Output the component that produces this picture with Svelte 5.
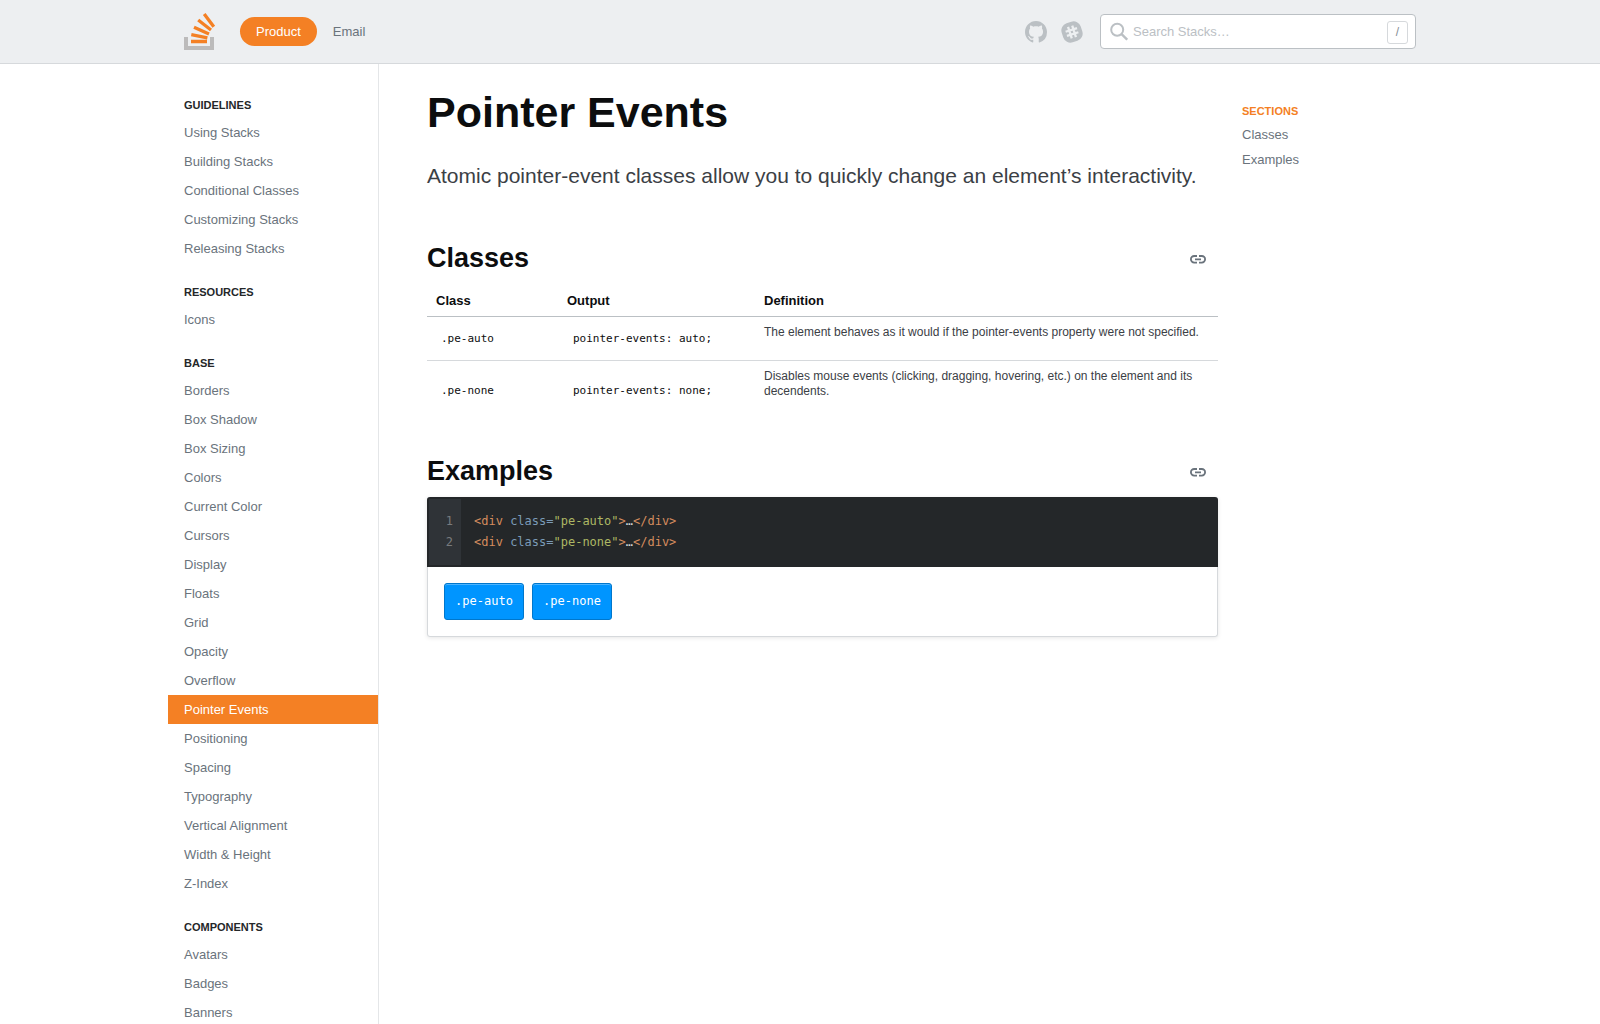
<script>
  const groups = [
    { title: 'Guidelines', items: ['Using Stacks', 'Building Stacks', 'Conditional Classes', 'Customizing Stacks', 'Releasing Stacks'] },
    { title: 'Resources', items: ['Icons'] },
    {
      title: 'Base',
      items: ['Borders', 'Box Shadow', 'Box Sizing', 'Colors', 'Current Color', 'Cursors', 'Display', 'Floats', 'Grid', 'Opacity', 'Overflow', 'Pointer Events', 'Positioning', 'Spacing', 'Typography', 'Vertical Alignment', 'Width & Height', 'Z-Index']
    },
    { title: 'Components', items: ['Avatars', 'Badges', 'Banners'] }
  ];
  const current = 'Pointer Events';

  const rows = [
    { name: '.pe-auto', output: 'pointer-events: auto;', text: 'The element behaves as it would if the pointer-events property were not specified.' },
    { name: '.pe-none', output: 'pointer-events: none;', text: 'Disables mouse events (clicking, dragging, hovering, etc.) on the element and its decendents.' }
  ];
  const examples = ['pe-auto', 'pe-none'];
  let query = $state('');
</script>

{#snippet heading(title)}
  <div class="section-head" id={title.toLowerCase()}>
    <h2>{title}</h2>
    <a class="anchor" href="#{title.toLowerCase()}" aria-label="Link to {title}">
      <svg width="16" height="9" viewBox="0 0 16 9" aria-hidden="true">
        <path d="M7 1H4.2a3.3 3.3 0 0 0 0 6.6H7M9 1h2.8a3.3 3.3 0 0 1 0 6.6H9M5 4.3h6" fill="none" stroke="currentColor" stroke-width="1.8" />
      </svg>
    </a>
  </div>
{/snippet}

<header class="topbar">
  <div class="container bar">
    <a class="logo" href="#home" aria-label="Stacks">
      <svg width="32" height="38" viewBox="0 12 32 38" aria-hidden="true">
        <path d="M0 37h4v9h22v-9h4v13H0z" fill="#bcbbbb" />
        <path d="M7 41.5h16M7.3 34.6l16.1 3.3M10 27.3l15 6.7M14.2 20l12.8 10M20.2 14l9.6 12.7" fill="none" stroke="#f48024" stroke-width="3.3" />
      </svg>
    </a>
    <nav class="tabs" aria-label="Main">
      <a class="tab selected" href="#product">Product</a>
      <a class="tab" href="#email">Email</a>
    </nav>
    <div class="social">
      <a href="#github" aria-label="GitHub">
        <svg width="22" height="22" viewBox="0 0 16 16" aria-hidden="true">
          <path fill="currentColor" d="M8 0C3.58 0 0 3.58 0 8c0 3.54 2.29 6.53 5.47 7.59.4.07.55-.17.55-.38 0-.19-.01-.82-.01-1.49-2.01.37-2.53-.49-2.69-.94-.09-.23-.48-.94-.82-1.13-.28-.15-.68-.52-.01-.53.63-.01 1.08.58 1.23.82.72 1.21 1.87.87 2.33.66.07-.52.28-.87.51-1.07-1.78-.2-3.64-.89-3.64-3.95 0-.87.31-1.59.82-2.15-.08-.2-.36-1.02.08-2.12 0 0 .67-.21 2.2.82.64-.18 1.32-.27 2-.27s1.36.09 2 .27c1.53-1.04 2.2-.82 2.2-.82.44 1.1.16 1.92.08 2.12.51.56.82 1.27.82 2.15 0 3.07-1.87 3.75-3.65 3.95.29.25.54.73.54 1.48 0 1.07-.01 1.93-.01 2.2 0 .21.15.46.55.38A8.01 8.01 0 0 0 16 8c0-4.42-3.58-8-8-8z" />
        </svg>
      </a>
      <a href="#slack" aria-label="Slack">
        <svg width="22" height="22" viewBox="0 0 22 22" aria-hidden="true">
          <g transform="rotate(-18 11 11)">
            <rect x="1" y="1" width="20" height="20" rx="7.5" fill="currentColor" />
            <path d="M8.8 5v12M13.2 5v12M5 8.8h12M5 13.2h12" fill="none" stroke="#edeff1" stroke-width="2.3" />
          </g>
        </svg>
      </a>
    </div>
    <label class="search">
      <svg width="18" height="20" viewBox="0 0 18 20" aria-hidden="true">
        <circle cx="7.2" cy="7.7" r="6" fill="none" stroke="currentColor" stroke-width="2" />
        <path d="M11.6 12.1l5.6 5.6" stroke="currentColor" stroke-width="2.4" />
      </svg>
      <input type="text" placeholder="Search Stacks…" aria-label="Search Stacks" bind:value={query} />
      <kbd>/</kbd>
    </label>
  </div>
</header>

<div class="container page">
  <nav class="sidebar" aria-label="Documentation">
    {#each groups as group}
      <h3>{group.title}</h3>
      <ul>
        {#each group.items as item}
          <li><a class:active={item === current} href="#{item}">{item}</a></li>
        {/each}
      </ul>
    {/each}
  </nav>

  <main>
    <h1>Pointer Events</h1>
    <p class="lead">Atomic pointer-event classes allow you to quickly change an element’s interactivity.</p>

    <section>
      {@render heading('Classes')}
      <table>
        <thead>
          <tr><th class="c-name" scope="col">Class</th><th class="c-output" scope="col">Output</th><th scope="col">Definition</th></tr>
        </thead>
        <tbody>
          {#each rows as row}
            <tr>
              <td><code>{row.name}</code></td>
              <td><code>{row.output}</code></td>
              <td><p>{row.text}</p></td>
            </tr>
          {/each}
        </tbody>
      </table>
    </section>

    <section>
      {@render heading('Examples')}
      <div class="preview">
        <div class="source">
          <div class="gutter">{#each examples as _, i}<span>{i + 1}</span>{/each}</div>
          <div class="code">
            {#each examples as name}
              <code><span class="tag">&lt;div</span> <span class="attr">class=</span><span class="str">"{name}"</span><span class="tag">&gt;</span>…<span class="tag">&lt;/div&gt;</span></code>
            {/each}
          </div>
        </div>
        <div class="demo">
          {#each examples as name}
            <button type="button" class={name}>.{name}</button>
          {/each}
        </div>
      </div>
    </section>
  </main>

  <aside>
    <h4>Sections</h4>
    <a href="#classes">Classes</a>
    <a href="#examples">Examples</a>
  </aside>
</div>

<style>
  :global(body) {
    background: #fff;
    color: #3b4045;
    font: 13px/17px "Liberation Sans", Arial, sans-serif;
  }
  :global(*) { box-sizing: border-box; }
  a { color: inherit; text-decoration: none; }
  h1, h2, h3, h4, p, ul { margin: 0; padding: 0; }
  ul { list-style: none; }
  svg { display: block; }
  code, kbd, button, .gutter { font-family: "DejaVu Sans Mono", monospace; }

  .container { max-width: 1264px; margin: 0 auto; }

  .topbar { background: #edeff1; border-bottom: 1px solid #d6d9dc; }
  .bar { display: flex; align-items: center; min-height: 63px; padding: 0 16px; }
  .logo { padding-bottom: 2px; }
  .tabs { display: flex; margin-left: 24px; color: #6a737c; }
  .tab { padding: 6px 16px; border-radius: 15px; }
  .tab.selected { background: #f48024; color: #fff; }
  .social { display: flex; gap: 14px; margin-left: auto; color: #bbc0c4; }
  .search {
    display: flex;
    align-items: center;
    width: 316px;
    height: 35px;
    margin-left: 17px;
    padding: 0 7px 0 9px;
    background: #fff;
    border: 1px solid #bbc0c4;
    border-radius: 4px;
    color: #bbc0c4;
  }
  .search input {
    flex: 1;
    min-width: 0;
    padding: 0 5px;
    border: 0;
    outline: 0;
    background: transparent;
    color: #3b4045;
    font: inherit;
  }
  .search input::placeholder { color: #bbc0c4; opacity: 1; }
  kbd {
    width: 21px;
    height: 23px;
    margin-top: 1px;
    border: 1px solid #d6d9dc;
    border-radius: 3px;
    color: #848d95;
    font: 12px/21px "Liberation Sans", Arial, sans-serif;
    text-align: center;
  }

  .page { display: flex; align-items: stretch; padding-right: 16px; }
  .sidebar { flex: 0 0 211px; border-right: 1px solid #e4e6e8; padding: 12px 0 2px; color: #6a737c; }
  .sidebar h3 {
    padding: 22px 16px 6px;
    color: #242729;
    font-size: 11px;
    line-height: 14px;
    text-transform: uppercase;
  }
  .sidebar a { display: block; padding: 6px 16px; }
  .sidebar a.active { background: #f48024; color: #fff; }

  main { flex: 1; min-width: 0; padding: 20px 0 48px 48px; }
  h1 { color: #0c0d0e; font-size: 43px; line-height: 56px; }
  .lead { margin: 22px 0 50px; font-size: 21px; line-height: 28px; }
  .section-head { display: flex; align-items: center; justify-content: space-between; margin-bottom: 8px; }
  h2 { color: #0c0d0e; font-size: 27px; line-height: 36px; }
  .anchor { padding: 12px 12px 10px; color: #6a737c; }

  table { width: 100%; margin-bottom: 34px; border-collapse: separate; border-spacing: 0; }
  th {
    padding: 9px 8px 7px;
    border-bottom: 1px solid #bbc0c4;
    color: #0c0d0e;
    font-size: 13px;
    line-height: 16px;
    text-align: left;
  }
  .c-name { width: 132px; }
  .c-output { width: 197px; }
  th:first-child { padding-left: 9px; }
  td { padding: 8px; font-size: 12px; line-height: 15px; vertical-align: middle; }
  tbody tr:not(:last-child) td { border-bottom: 1px solid #d6d9dc; }
  td p { margin-bottom: 12px; }
  td code { padding: 0 6px; color: #0c0d0e; font-size: 11px; white-space: nowrap; }

  .preview {
    border: 1px solid #d6d9dc;
    border-top: 0;
    border-radius: 3px;
    box-shadow: 0 1px 4px rgba(12, 13, 14, 0.1);
  }
  .source {
    display: flex;
    margin: 0 -1px;
    border: 2px solid #242729;
    border-radius: 3px 3px 0 0;
    background: #242729;
    color: #d6d9dc;
    font-size: 12px;
    line-height: 21px;
  }
  .gutter { display: flex; flex-direction: column; width: 32px; padding: 12px 8px; background: #2f3337; color: #787b7e; text-align: right; }
  .code { display: flex; flex-direction: column; padding: 12px 13px; }
  .tag { color: #d48c5e; }
  .attr { color: #7b9bb8; }
  .str { color: #adb764; }
  .demo { display: flex; gap: 8px; padding: 16px; }
  button {
    min-width: 80px;
    padding: 10px;
    border: 1px solid #0077cc;
    border-radius: 3px;
    background: #0095ff;
    box-shadow: inset 0 1px 0 rgba(102, 191, 255, 0.75);
    color: #fff;
    font-size: 12px;
    line-height: 15px;
  }
  .pe-none { pointer-events: none; }

  aside { display: flex; flex-direction: column; gap: 8px; flex: 0 0 174px; margin-left: 24px; padding-top: 40px; color: #6a737c; }
  h4 { color: #f48024; font-size: 11px; line-height: 14px; text-transform: uppercase; }
</style>
